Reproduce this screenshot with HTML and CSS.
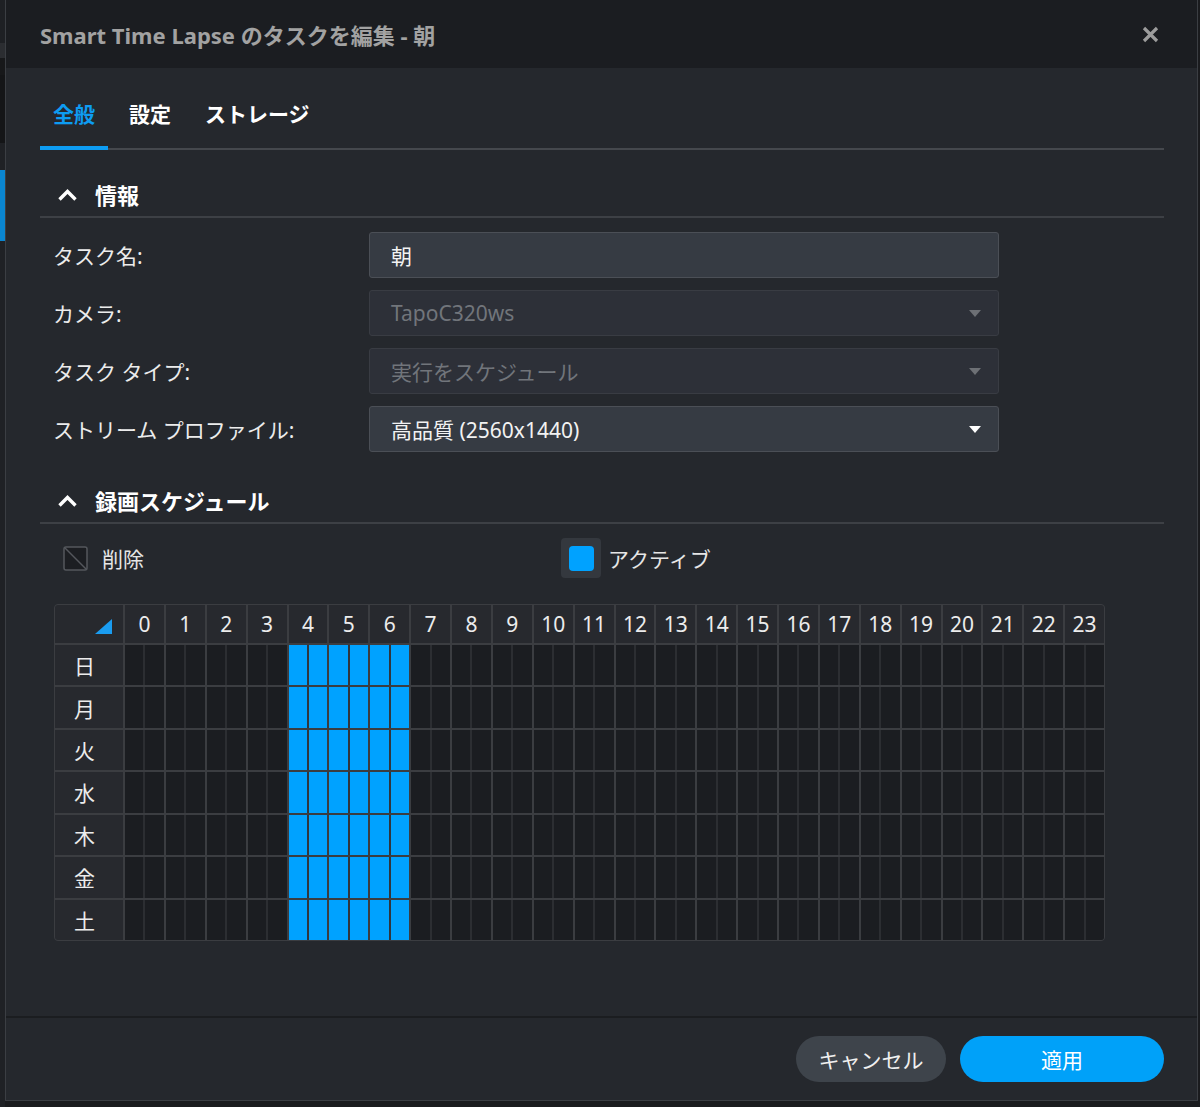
FILE: index.html
```html
<!DOCTYPE html>
<html lang="ja">
<head>
  <title>Smart Time Lapse のタスクを編集 - 朝</title>
  <meta charset="UTF-8">
  <link rel="stylesheet" href="styles.css">
</head>
<body>
<div class="desktop">
  <div class="side-strip">
    <div class="strip-a"></div>
    <div class="strip-b"></div>
    <div class="strip-c"></div>
    <div class="strip-d"></div>
    <div class="strip-e"></div>
    <div class="strip-active"></div>
    <div class="strip-rest"></div>
  </div>

  <div class="dialog">
    <header class="dialog-head">
      <h1 class="dialog-title">Smart Time Lapse のタスクを編集 - 朝</h1>
      <button class="close-btn" aria-label="閉じる">
        <svg width="17" height="17" viewBox="0 0 17 17">
          <path d="M2 2 L15 15 M15 2 L2 15" stroke="#9c9c9c" stroke-width="3.2" fill="none"/>
        </svg>
      </button>
    </header>

    <div class="dialog-body">
      <nav class="tabs">
        <div class="tab active">全般</div>
        <div class="tab">設定</div>
        <div class="tab">ストレージ</div>
      </nav>

      <h2 class="section-title">
        <svg width="21" height="14" viewBox="0 0 21 14">
          <path d="M2.5 11.5 L10.5 3.5 L18.5 11.5" stroke="#fff" stroke-width="3.4" fill="none"/>
        </svg>
        情報
      </h2>

      <div class="form">
        <div class="form-row">
          <label>タスク名:</label>
          <div class="field">朝</div>
        </div>
        <div class="form-row">
          <label>カメラ:</label>
          <div class="field disabled">TapoC320ws<span class="caret"></span></div>
        </div>
        <div class="form-row">
          <label>タスク タイプ:</label>
          <div class="field disabled">実行をスケジュール<span class="caret"></span></div>
        </div>
        <div class="form-row">
          <label>ストリーム プロファイル:</label>
          <div class="field">高品質 (2560x1440)<span class="caret"></span></div>
        </div>
      </div>

      <h2 class="section-title">
        <svg width="21" height="14" viewBox="0 0 21 14">
          <path d="M2.5 11.5 L10.5 3.5 L18.5 11.5" stroke="#fff" stroke-width="3.4" fill="none"/>
        </svg>
        録画スケジュール
      </h2>

      <div class="legend">
        <div class="legend-item">
          <span class="legend-icon">
            <svg width="25" height="25" viewBox="0 0 25 25">
              <rect x="1" y="1" width="23" height="23" rx="2" fill="#1c1e22" stroke="#54575c" stroke-width="1.5"/>
              <path d="M2 2 L23 23" stroke="#54575c" stroke-width="1.4"/>
            </svg>
          </span>
          削除
        </div>
        <div class="legend-item">
          <span class="legend-icon selected"><span class="swatch"></span></span>
          アクティブ
        </div>
      </div>

      <div class="schedule" id="schedule">
        <div class="corner">
          <svg width="17" height="15" viewBox="0 0 17 15">
            <polygon points="17,0 17,15 0,15" fill="#1a9cf0"/>
          </svg>
        </div>
      </div>
    </div>

    <footer class="dialog-foot">
      <button class="btn btn-cancel">キャンセル</button>
      <button class="btn btn-apply">適用</button>
    </footer>
  </div>
</div>
<script>
  const grid = document.querySelector('#schedule');
  const days = ['日', '月', '火', '水', '木', '金', '土'];
  const activeHours = [4, 5, 6];

  for (let h = 0; h < 24; h++) {
    const head = document.createElement('div');
    head.className = 'hour';
    head.textContent = h;
    grid.appendChild(head);
  }

  days.forEach((day) => {
    const label = document.createElement('div');
    label.className = 'day';
    label.textContent = day;
    grid.appendChild(label);
    for (let h = 0; h < 24; h++) {
      const slot = document.createElement('div');
      slot.className = activeHours.includes(h) ? 'slot on' : 'slot';
      slot.innerHTML = '<span></span><span></span>';
      grid.appendChild(slot);
    }
  });
</script>
</body>
</html>
```

FILE: styles.css
```css
body {
  margin: 0;
  background: #1a1b1e;
  font-family: "Noto Sans", "Noto Sans CJK JP", sans-serif;
  color: #e6e6e6;
}

.desktop {
  display: flex;
  height: 1107px;
  overflow: hidden;
}

/* window behind the dialog */
.side-strip {
  width: 5px;
  display: flex;
  flex-direction: column;
}

.strip-a { height: 43px; background: #1e2024; }
.strip-b { height: 15px; background: #2b2d31; }
.strip-c { height: 17px; background: #17181a; }
.strip-d { height: 68px; background: #141517; }
.strip-e { height: 27px; background: #1f2125; }
.strip-active { height: 71px; background: #0a86d1; }
.strip-rest { flex: 1; background: #1f2125; }

.dialog {
  width: 1191px;
  height: 1100px;
  display: flex;
  flex-direction: column;
  background: #25282d;
  border: 1px solid #3b3e43;
  border-top: none;
}

.dialog-head {
  height: 68px;
  flex-shrink: 0;
  display: flex;
  align-items: center;
  justify-content: space-between;
  padding: 0 38px 0 34px;
  background: #1b1d21;
}

.dialog-title {
  margin: 0;
  font-size: 22px;
  font-weight: 700;
  color: #a2a2a2;
}

.close-btn {
  border: none;
  background: none;
  padding: 0;
  display: flex;
}

.dialog-body {
  flex: 1;
  padding: 22px 33px 0 34px;
}

.tabs {
  display: flex;
  gap: 8px;
  border-bottom: 2px solid #45484d;
}

.tab {
  padding: 10px 13px 18px;
  margin-bottom: -2px;
  border-bottom: 4px solid transparent;
  font-size: 21px;
  line-height: 28px;
  font-weight: 700;
  color: #fff;
}

.tab.active {
  color: #0d9cf2;
  border-bottom-color: #0d9cf2;
}

.section-title {
  margin: 0;
  display: flex;
  align-items: center;
  gap: 17px;
  padding: 31px 0 7px 17px;
  border-bottom: 2px solid #3d4045;
  font-size: 22px;
  line-height: 28px;
  font-weight: 700;
  color: #fff;
}

.form {
  display: flex;
  flex-direction: column;
  gap: 12px;
  padding: 14px 0 4px 13px;
}

.form-row {
  display: flex;
  align-items: center;
}

.form-row label {
  width: 316px;
  font-size: 21px;
  color: #ececec;
}

.field {
  width: 590px;
  height: 44px;
  padding: 0 17px 0 21px;
  display: flex;
  align-items: center;
  justify-content: space-between;
  background: #363b43;
  border: 1px solid #4b4f56;
  border-radius: 3px;
  font-size: 21px;
  color: #f2f2f2;
}

.field.disabled {
  background: #2d3038;
  border-color: #393c43;
  color: #71757b;
}

.caret {
  width: 0;
  height: 0;
  border-left: 6.5px solid transparent;
  border-right: 6.5px solid transparent;
  border-top: 7px solid #fff;
}

.field.disabled .caret {
  border-top-color: #6d7075;
}

.legend {
  display: flex;
  padding: 14px 0 0 15px;
}

.legend-item {
  width: 506px;
  display: flex;
  align-items: center;
  gap: 7px;
  font-size: 21px;
  color: #e6e6e6;
}

.legend-icon {
  width: 40px;
  height: 40px;
  display: flex;
  align-items: center;
  justify-content: center;
  border-radius: 4px;
}

.legend-icon.selected {
  background: #34383e;
}

.swatch {
  width: 25px;
  height: 25px;
  border-radius: 4px;
  background: #00a2ff;
}

.schedule {
  width: 1049px;
  height: 335px;
  margin: 26px 0 0 14px;
  display: grid;
  grid-template-columns: 68px repeat(24, 1fr);
  grid-template-rows: 38px repeat(7, 1fr);
  gap: 2px;
  background: #3b3d41;
  border: 1px solid #3b3d41;
  border-radius: 4px;
  overflow: hidden;
}

.corner {
  display: flex;
  align-items: flex-end;
  justify-content: flex-end;
  padding: 0 11px 9px 0;
  background: #27292e;
}

.hour,
.day {
  display: flex;
  align-items: center;
  justify-content: center;
  background: #27292e;
  font-size: 21px;
  color: #ececec;
}

.day {
  padding-right: 9px;
}

/* one hour = two half-hour cells */
.slot {
  display: grid;
  grid-template-columns: 1fr 1fr;
  gap: 2px;
  background: #2c2e32;
}

.slot span {
  background: #1b1d21;
}

.slot.on {
  background: #30363e;
}

.slot.on span {
  background: #00a2ff;
}

.dialog-foot {
  flex-shrink: 0;
  display: flex;
  justify-content: flex-end;
  gap: 14px;
  padding: 18px 33px 18px 0;
  border-top: 2px solid #1b1d20;
}

.btn {
  height: 46px;
  border: none;
  border-radius: 23px;
  font-family: inherit;
  font-size: 21px;
  color: #f0f0f0;
}

.btn-cancel {
  width: 150px;
  background: #3e444b;
}

.btn-apply {
  width: 204px;
  background: #00a1f9;
  color: #fff;
}
```
